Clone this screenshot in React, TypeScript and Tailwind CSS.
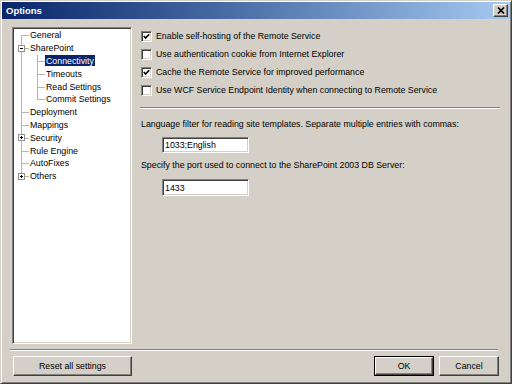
import type { JSX } from 'react';

type TreeNode = {
  label: string;
  level: 0 | 1;
  expander?: '+' | '-';
  first?: boolean;
  last?: boolean;
  selected?: boolean;
};

const nodes: TreeNode[] = [
  { label: 'General', level: 0, first: true },
  { label: 'SharePoint', level: 0, expander: '-' },
  { label: 'Connectivity', level: 1, selected: true },
  { label: 'Timeouts', level: 1 },
  { label: 'Read Settings', level: 1 },
  { label: 'Commit Settings', level: 1, last: true },
  { label: 'Deployment', level: 0 },
  { label: 'Mappings', level: 0 },
  { label: 'Security', level: 0, expander: '+' },
  { label: 'Rule Engine', level: 0 },
  { label: 'AutoFixes', level: 0 },
  { label: 'Others', level: 0, expander: '+', last: true },
];

const raised =
  'border border-t-white border-l-white border-r-[#404040] border-b-[#404040] shadow-[inset_-1px_-1px_0_#808080] bg-[#d4d0c8]';
const sunken =
  'border border-t-[#808080] border-l-[#808080] border-r-white border-b-white shadow-[inset_1px_1px_0_#404040,inset_-1px_-1px_0_#d4d0c8] bg-white';

function LineCell({
  up,
  down,
  across,
  expander,
}: {
  up: boolean;
  down: boolean;
  across: boolean;
  expander?: '+' | '-';
}): JSX.Element {
  return (
    <span className="relative h-full w-[16px] shrink-0">
      {up ? <span className="absolute left-[8px] top-0 h-1/2 w-px bg-[#b4b4b4]" /> : null}
      {down ? <span className="absolute left-[8px] top-1/2 h-1/2 w-px bg-[#b4b4b4]" /> : null}
      {across ? <span className="absolute left-[8px] right-0 top-1/2 h-px bg-[#b4b4b4]" /> : null}
      {expander ? (
        <span className="absolute left-[5px] top-[3px] flex h-[7px] w-[7px] items-center justify-center border border-[#909090] bg-white">
          <span className="absolute h-px w-[3px] bg-black" />
          {expander === '+' ? <span className="absolute h-[3px] w-px bg-black" /> : null}
        </span>
      ) : null}
    </span>
  );
}

function TreeRow({ node }: { node: TreeNode }): JSX.Element {
  return (
    <div className="flex h-[12.8px] items-center">
      {node.level === 0 ? (
        <LineCell up={!node.first} down={!node.last} across expander={node.expander} />
      ) : (
        <>
          <LineCell up down across={false} />
          <LineCell up down={!node.last} across />
        </>
      )}
      <span
        className={
          node.selected
            ? 'flex h-[11px] items-center bg-[#0a246a] px-[1px] text-white'
            : 'px-[1px] text-black'
        }
      >
        {node.label}
      </span>
    </div>
  );
}

function CheckRow({ label, checked }: { label: string; checked: boolean }): JSX.Element {
  return (
    <div className="flex h-[18px] items-center">
      <span className={`ml-[1px] flex h-[11px] w-[11px] items-center justify-center ${sunken}`}>
        {checked ? (
          <svg width="7" height="7" viewBox="0 0 7 7">
            <polyline points="0.8,3 2.6,5 6.2,1.2" fill="none" stroke="#000" strokeWidth="1.6" />
          </svg>
        ) : null}
      </span>
      <span className="ml-[4px] text-black">{label}</span>
    </div>
  );
}

function Etched({ className }: { className: string }): JSX.Element {
  return <div className={`h-[2px] border-t border-b border-t-[#808080] border-b-white ${className}`} />;
}

export default function App(): JSX.Element {
  return (
    <div className="flex h-[384px] w-[512px] flex-col overflow-hidden border border-t-[#d4d0c8] border-l-[#d4d0c8] border-r-[#404040] border-b-[#404040] bg-[#d4d0c8] p-[1px] font-['Liberation_Sans',Arial,sans-serif] text-[8.8px] leading-[12px] shadow-[inset_1px_1px_0_#fff,inset_-1px_-1px_0_#808080]">
      <div className="flex h-[17px] shrink-0 items-center justify-between bg-linear-to-r from-[#0a246a] to-[#a6caf0] pl-[4px] pr-[2px]">
        <span className="text-[9.5px] font-bold text-white">Options</span>
        <span className={`flex h-[13px] w-[15px] items-center justify-center ${raised}`}>
          <svg width="8" height="7" viewBox="0 0 8 7">
            <path d="M1 0.5 L7 6.5 M7 0.5 L1 6.5" stroke="#000" strokeWidth="1.7" />
          </svg>
        </span>
      </div>

      <div className="mt-[8px] flex h-[317px]">
        <div className={`ml-[10px] w-[120px] shrink-0 pt-[1px] ${sunken}`}>
          {nodes.map((node) => (
            <TreeRow key={node.label} node={node} />
          ))}
        </div>

        <div className="ml-[8px] mr-[10px] flex flex-1 flex-col">
          <CheckRow label="Enable self-hosting of the Remote Service" checked />
          <CheckRow label="Use authentication cookie from Internet Explorer" checked={false} />
          <CheckRow label="Cache the Remote Service for improved performance" checked />
          <CheckRow label="Use WCF Service Endpoint Identity when connecting to Remote Service" checked={false} />

          <Etched className="mt-[8px]" />

          <div className="mt-[9px] pl-[1px] text-black">
            Language filter for reading site templates. Separate multiple entries with commas:
          </div>
          <div className={`ml-[22px] mt-[7px] flex h-[16px] w-[87px] items-center px-[2px] text-black ${sunken}`}>
            1033;English
          </div>
          <div className="mt-[6px] pl-[1px] text-black">
            Specify the port used to connect to the SharePoint 2003 DB Server:
          </div>
          <div className={`ml-[22px] mt-[8px] flex h-[17px] w-[87px] items-center px-[2px] text-black ${sunken}`}>
            1433
          </div>
        </div>
      </div>

      <Etched className="ml-[8px] mr-[12px] mt-[5px]" />

      <div className="mt-[5px] flex h-[20px] items-stretch">
        <button type="button" className={`ml-[11px] w-[119px] text-black ${raised}`}>
          Reset all settings
        </button>
        <div className="ml-auto mr-[11px] flex gap-[5px]">
          <div className="border border-black">
            <button type="button" className={`h-full w-[58px] text-black ${raised}`}>
              OK
            </button>
          </div>
          <button type="button" className={`w-[60px] text-black ${raised}`}>
            Cancel
          </button>
        </div>
      </div>
    </div>
  );
}
